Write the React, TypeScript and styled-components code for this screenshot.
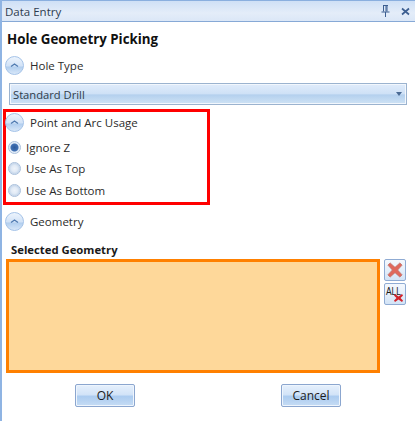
import styled, { createGlobalStyle } from "styled-components";

const GlobalStyle = createGlobalStyle`
  html, body {
    margin: 0;
    padding: 0;
    background: #ffffff;
  }
  body {
    font-family: "Open Sans", "Noto Sans", "Liberation Sans", sans-serif;
    font-size: 12px;
    color: #1e1e1e;
  }
`;

const Panel = styled.div`
  box-sizing: border-box;
  width: 415px;
  height: 421px;
  border-left: 2px solid #8fb4e3;
  background: #ffffff;
  display: flex;
  flex-direction: column;
  overflow: hidden;
`;

const TitleBar = styled.div`
  box-sizing: border-box;
  height: 22px;
  flex: none;
  display: flex;
  align-items: center;
  justify-content: space-between;
  padding: 0 5px 0 3px;
  border-top: 1px solid #8aafdf;
  border-bottom: 1px solid #87a9d6;
  background: linear-gradient(#cfe0f6, #e4edf9 60%, #dbe7f7);
  color: #2d3c50;
  font-size: 11.5px;
`;

const TitleIcons = styled.div`
  display: flex;
  align-items: center;
  gap: 11px;
`;

const Heading = styled.h1`
  margin: 7px 0 0 5px;
  height: 20px;
  font-size: 13.3px;
  line-height: 20px;
  font-weight: 700;
  color: #111111;
`;

const ExpanderRow = styled.div<{ $top: number }>`
  display: flex;
  align-items: center;
  gap: 6px;
  height: 20px;
  margin: ${({ $top }) => $top}px 0 0 3px;
  color: #2b2b2b;
  font-size: 11.5px;
`;

const ComboBox = styled.div`
  box-sizing: border-box;
  height: 22px;
  width: 398px;
  margin: 8px 0 0 7px;
  padding: 0 3px;
  display: flex;
  align-items: center;
  justify-content: space-between;
  border: 1px solid #9bb3cf;
  box-shadow: inset 0 0 0 1px #f2f7fd;
  background: linear-gradient(#e0ecfb, #cfe1f6 48%, #b4d0ee 55%, #cfe3f5);
  font-size: 11.2px;
  color: #2f3c4a;
`;

const ComboArrow = styled.span`
  width: 0;
  height: 0;
  margin-right: 1px;
  border-left: 3px solid transparent;
  border-right: 3px solid transparent;
  border-top: 4px solid #4a6a94;
`;

const UsageBox = styled.section`
  box-sizing: border-box;
  width: 207px;
  height: 96px;
  margin: 4px 0 0 1px;
  border: 3px solid #ff0000;
  display: flex;
  flex-direction: column;
`;

const UsageHeader = styled(ExpanderRow)`
  margin: 0 0 0 -1px;
  height: 21px;
`;

const RadioList = styled.div`
  display: flex;
  flex-direction: column;
  margin-top: 3px;
`;

const RadioRow = styled.label<{ $height: number }>`
  display: flex;
  align-items: center;
  height: ${({ $height }) => $height}px;
  gap: 5px;
  padding-left: 2px;
  font-size: 11.5px;
  color: #2b2b2b;
`;

const RadioDot = styled.span<{ $checked?: boolean }>`
  box-sizing: border-box;
  width: 13px;
  height: 13px;
  flex: none;
  border-radius: 50%;
  border: 1px solid #a9bfdb;
  background: ${({ $checked }) =>
    $checked
      ? "radial-gradient(circle, #2c5a9c 0, #3f6fb2 3.500px, #dce8f6 4.500px, #eef4fb 6px)"
      : "radial-gradient(circle, #eef3fa 0, #e2ebf6 3px, #c9d9ec 5px, #eef4fb 6px)"};
`;

const SelectedLabel = styled.div`
  margin: 10px 0 0 9px;
  height: 18px;
  line-height: 18px;
  font-size: 11.3px;
  font-weight: 700;
  color: #1a1a1a;
`;

const SelectionRow = styled.div`
  display: flex;
  gap: 4px;
  margin: 0 0 0 4px;
`;

const SelectionList = styled.div`
  box-sizing: border-box;
  width: 374px;
  height: 114px;
  border: 3px solid #ff8000;
  background: #fed89a;
`;

const SideButtons = styled.div`
  display: flex;
  flex-direction: column;
  gap: 2px;
`;

const IconButton = styled.button`
  box-sizing: border-box;
  width: 22px;
  height: 22px;
  padding: 0;
  border: 1px solid #8fabd3;
  border-radius: 2px;
  background: linear-gradient(#f4f8fd, #e2edf9 60%, #d2e3f6);
  display: flex;
  align-items: center;
  justify-content: center;
`;

const Footer = styled.div`
  display: flex;
  gap: 146px;
  margin: 11px 0 0 73px;
`;

const DialogButton = styled.button`
  box-sizing: border-box;
  width: 60px;
  height: 23px;
  padding: 0;
  border: 1px solid #8ba6cf;
  border-radius: 2px;
  box-shadow: inset 0 0 0 1px #eef5fd;
  background: linear-gradient(#e6f0fc, #d3e4f8 45%, #acccf0 55%, #c6dcf4);
  font-family: inherit;
  font-size: 12px;
  color: #1c1c1c;
`;

const ExpanderIcon = () => (
  <svg width="19" height="19" viewBox="0 0 19 19">
    <defs>
      <linearGradient id="expanderFill" x1="0" y1="0" x2="0" y2="1">
        <stop offset="0" stopColor="#eef5fd" />
        <stop offset="0.5" stopColor="#d3e3f7" />
        <stop offset="0.6" stopColor="#b3cfef" />
        <stop offset="1" stopColor="#dbe9f9" />
      </linearGradient>
    </defs>
    <circle cx="9.5" cy="9.5" r="9" fill="url(#expanderFill)" stroke="#a5c3e8" />
    <path d="M6 10.500 9.500 8l3.500 2.500" fill="none" stroke="#4f7ab0" strokeWidth="1.3" />
  </svg>
);

const PinIcon = () => (
  <svg width="9" height="12" viewBox="0 0 9 12">
    <path
      d="M2 .5h5M2.500 .5v6M6 .5v6M5 1v5.500M.5 7h8M4.500 7v5"
      fill="none"
      stroke="#3d5f91"
    />
  </svg>
);

const CloseIcon = () => (
  <svg width="9" height="9" viewBox="0 0 9 9">
    <path d="M1 1.500l7 6M8 1.500l-7 6" fill="none" stroke="#3d5f91" strokeWidth="1.7" />
  </svg>
);

const RemoveIcon = () => (
  <svg width="16" height="16" viewBox="0 0 18 18">
    <path
      d="M3.500 1 9 6l5.500-5L17 3.500 12 9l5 5.500L14.500 17 9 12l-5.500 5L1 14.500 6 9 1 3.500z"
      fill="#e0685c"
      stroke="#bd6f68"
      strokeWidth="0.8"
    />
  </svg>
);

const RemoveAllIcon = () => (
  <svg width="20" height="20" viewBox="0 0 20 20">
    <text x="1" y="11" fontFamily="Liberation Sans, sans-serif" fontSize="11" textLength="15" lengthAdjust="spacingAndGlyphs" fill="#1a1a1a">
      ALL
    </text>
    <path d="M10 10 13.500 12.500 17 10l1 1.500-2.500 2.500 2.500 2.500-1 1.500-3.500-2.500-3.500 2.500-1-1.500 2.500-2.500-2.500-2.500z" fill="#d2232a" />
  </svg>
);

const radios = [
  { label: "Ignore Z", checked: true, height: 22 },
  { label: "Use As Top", checked: false, height: 21 },
  { label: "Use As Bottom", checked: false, height: 22 },
];

export default function App() {
  return (
    <>
      <GlobalStyle />
      <Panel>
        <TitleBar>
          <span>Data Entry</span>
          <TitleIcons>
            <PinIcon />
            <CloseIcon />
          </TitleIcons>
        </TitleBar>
        <Heading>Hole Geometry Picking</Heading>
        <ExpanderRow $top={6}>
          <ExpanderIcon />
          <span>Hole Type</span>
        </ExpanderRow>
        <ComboBox>
          <span>Standard Drill</span>
          <ComboArrow />
        </ComboBox>
        <UsageBox>
          <UsageHeader $top={0}>
            <ExpanderIcon />
            <span>Point and Arc Usage</span>
          </UsageHeader>
          <RadioList>
            {radios.map((radio) => (
              <RadioRow key={radio.label} $height={radio.height}>
                <RadioDot $checked={radio.checked} />
                <span>{radio.label}</span>
              </RadioRow>
            ))}
          </RadioList>
        </UsageBox>
        <ExpanderRow $top={6}>
          <ExpanderIcon />
          <span>Geometry</span>
        </ExpanderRow>
        <SelectedLabel>Selected Geometry</SelectedLabel>
        <SelectionRow>
          <SelectionList />
          <SideButtons>
            <IconButton>
              <RemoveIcon />
            </IconButton>
            <IconButton>
              <RemoveAllIcon />
            </IconButton>
          </SideButtons>
        </SelectionRow>
        <Footer>
          <DialogButton>OK</DialogButton>
          <DialogButton>Cancel</DialogButton>
        </Footer>
      </Panel>
    </>
  );
}
